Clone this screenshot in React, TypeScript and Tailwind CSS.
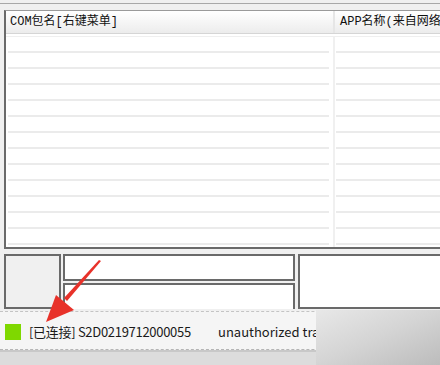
import React from "react";

const rows = Array.from({ length: 14 });

export default function App() {
  return (
    <div
      className="relative w-[440px] h-[365px] overflow-hidden bg-[#f0f0f0]"
      style={{ fontFamily: '"Liberation Mono", "Noto Sans CJK SC", monospace' }}
    >
      <div className="h-[3px]" />
      <div className="h-px bg-[#a8a8a8]" />
      <div className="h-[6px]" />
      {/* list view */}
      <div className="ml-[4px] w-[460px] h-[239px] border-l-2 border-t border-b-2 border-[#6a6a6a] border-t-[#9a9a9a] bg-white overflow-hidden">
        <div className="flex h-[23px] bg-gradient-to-b from-white to-[#ececec] border-b border-[#d5d5d5] text-[12px] text-[#111] leading-[22px]">
          <div className="w-[329px] shrink-0 pl-[4px] border-r-2 border-[#e6e6e6] whitespace-nowrap">COM包名[右键菜单]</div>
          <div className="pl-[5px] whitespace-nowrap">APP名称(来自网络查</div>
        </div>
        <div className="h-[3px] border-b border-[#efefef]" />
        <div className="flex flex-col">
          {rows.map((_, i) => (
            <div key={i} className="flex h-[16px] items-end">
              <div className="w-[329px] shrink-0 h-full pl-[2px] pr-[4px] border-r-2 border-[#f0f0f0] flex items-end">
                <div className="w-full h-[2px] bg-[#ebebeb]" />
              </div>
              <div className="flex-1 h-full pl-[1px] flex items-end">
                <div className="w-full h-[2px] bg-[#ebebeb]" />
              </div>
            </div>
          ))}
        </div>
      </div>
      {/* bottom panels */}
      <div className="flex mt-[5px] h-[55px] pl-[4px] gap-[2px]">
        <div className="w-[57px] shrink-0 h-full border-2 border-[#6a6a6a] bg-[#f0f0f0]" />
        <div className="w-[232px] shrink-0 h-full flex flex-col gap-[2px]">
          <div className="h-[27px] border-2 border-[#6a6a6a] bg-white" />
          <div className="flex-1 border-2 border-[#6a6a6a] border-b-0 bg-white" />
        </div>
        <div className="ml-[1px] w-[160px] shrink-0 h-full border-2 border-[#6a6a6a] bg-white" />
      </div>
      {/* status bar */}
      <div
        className="mt-[2px] h-[39px] border-t border-dashed border-[#c4c4c4] bg-[#f5f5f5] border-b border-b-[#b5b5b5] flex items-center text-[13px] text-[#1a1a1a]"
        style={{ fontFamily: '"Noto Sans CJK SC", "Noto Sans", sans-serif' }}
      >
        <div className="ml-[5px] shrink-0 w-[16px] h-[16px] bg-[#7fd800] mt-[2px]" />
        <div className="ml-[8px] w-[160px] shrink-0 whitespace-nowrap tracking-[-0.3px] mt-[2px]">[已连接] S2D0219712000055</div>
        <div className="ml-[29px] whitespace-nowrap mt-[2px]">unauthorized transport</div>
      </div>
      <div className="h-[2px] bg-[#c8c8c8]" />
      <div className="h-[13px] bg-[#dcdcdc]" />
      {/* gradient overlay artifact on the right */}
      <div className="absolute left-[316px] top-[310px] w-[124px] h-[55px] bg-gradient-to-br from-[#e8e8e8] via-[#d4d4d4] to-[#bcbcbc]" />
      {/* red arrow */}
      <svg className="absolute left-0 top-0" width="440" height="365" viewBox="0 0 440 365">
        <path d="M101 261 L99 260 L64 298 L67 301 Z" fill="#e8322a" />
        <path d="M46 322 L56 295 L74 310 Z" fill="#e8322a" />
      </svg>
    </div>
  );
}
